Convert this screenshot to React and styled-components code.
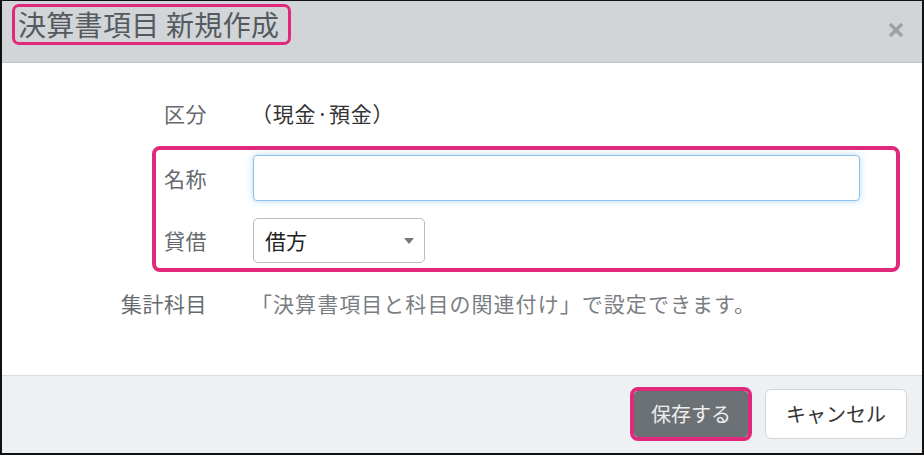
import React from "react";
import styled, { createGlobalStyle } from "styled-components";

const Global = createGlobalStyle`
  html, body { margin: 0; padding: 0; background: #fff; }
  body { font-family: "Noto Sans CJK JP", "Noto Sans", sans-serif; }
  * { box-sizing: border-box; }
`;

const Frame = styled.div`
  width: 924px;
  height: 455px;
  border-style: solid;
  border-color: #111;
  border-width: 1px 2px 2px 2px;
  display: flex;
  flex-direction: column;
  overflow: hidden;
`;

const Header = styled.div`
  height: 62px;
  flex: none;
  background: #d1d5d8;
  border-bottom: 1px solid #c3c7ca;
  display: flex;
  align-items: center;
  justify-content: space-between;
  padding: 0 17px 0 10px;
`;

const Highlight = styled.div`
  border: ${(p) => p.$w || 4}px solid #e0297a;
  border-radius: ${(p) => p.$r || 8}px;
`;

const TitleBox = styled(Highlight)`
  height: 41px;
  width: 279px;
  display: flex;
  align-items: center;
  padding: 0 0 2px 3px;
  margin-top: -14px;
`;

const Title = styled.h1`
  margin: 0;
  font-size: 28px;
  font-weight: 400;
  color: #555a5e;
  letter-spacing: 0.3px;
  line-height: 1;
  white-space: nowrap;
`;

const Close = styled.button`
  border: 0;
  background: none;
  padding: 0;
  width: 18px;
  height: 18px;
  margin-top: -4px;
  display: flex;
  align-items: center;
  justify-content: center;
  cursor: pointer;
`;

const Body = styled.div`
  flex: 1;
  padding-top: 27px;
`;

const Row = styled.div`
  display: grid;
  grid-template-columns: ${(p) => p.$label}px 1fr;
  column-gap: 46px;
  align-items: center;
  min-height: 46px;
`;

const Label = styled.div`
  text-align: right;
  font-size: 21px;
  color: #666a6e;
  white-space: nowrap;
  letter-spacing: 0.5px;
`;

const Value = styled.div`
  font-size: 21px;
  color: #333;
  margin-left: -2px;
  letter-spacing: 0.8px;
`;

const Note = styled.div`
  font-size: 21px;
  color: #7a7e82;
  letter-spacing: 1.05px;
  margin-left: -2px;
  white-space: nowrap;
`;

const Group = styled(Highlight)`
  margin: 10px 22px 0 150px;
  padding: 5px 36px 5px 0;
  display: flex;
  flex-direction: column;
  gap: 16px;
`;

const TextInput = styled.input`
  width: 100%;
  height: 46px;
  border: 1.5px solid #8cc1ec;
  border-radius: 4px;
  box-shadow: 0 0 7px rgba(102, 175, 233, 0.45);
  outline: none;
  font-size: 20px;
  padding: 0 12px;
  font-family: inherit;
`;

const Select = styled.div`
  width: 172px;
  height: 45px;
  border: 1px solid #b8bcc0;
  border-radius: 5px;
  display: flex;
  align-items: center;
  justify-content: space-between;
  padding: 0 10px 0 11px;
  font-size: 21px;
  color: #222;
  background: #fff;
`;

const Caret = styled.span`
  width: 0;
  height: 0;
  border-left: 5.5px solid transparent;
  border-right: 5.5px solid transparent;
  border-top: 6px solid #777;
  margin-top: 2px;
`;

const NoteRow = styled(Row)`
  margin-top: 8px;
`;

const Footer = styled.div`
  flex: none;
  height: 78px;
  background: #eef1f4;
  border-top: 1px solid #dadde0;
  display: flex;
  align-items: center;
  justify-content: flex-end;
  gap: 13px;
  padding: 0 15px 2px 0;
`;

const SaveWrap = styled(Highlight)`
  padding: 0;
  border-radius: 8px;
`;

const Button = styled.button`
  font-family: inherit;
  font-size: 20px;
  height: ${(p) => (p.$primary ? 46 : 50)}px;
  padding: 0 ${(p) => (p.$primary ? 16 : 20)}px;
  border-radius: ${(p) => (p.$primary ? 4 : 6)}px;
  border: 1px solid ${(p) => (p.$primary ? "#6c7175" : "#d2d5d8")};
  background: ${(p) => (p.$primary ? "#6c7175" : "#fff")};
  color: ${(p) => (p.$primary ? "#eceeef" : "#333")};
  display: block;
  cursor: pointer;
`;

export default function App() {
  return (
    <>
      <Global />
      <Frame>
        <Header>
          <TitleBox $w={3} $r={7}>
            <Title>決算書項目 新規作成</Title>
          </TitleBox>
          <Close aria-label="close">
            <svg width="16" height="16" viewBox="0 0 16 16">
              <path d="M2 2 L14 14 M14 2 L2 14" stroke="#9ea2a6" strokeWidth="3.6" strokeLinecap="butt" />
            </svg>
          </Close>
        </Header>
        <Body>
          <Row $label={205}>
            <Label>区分</Label>
            <Value>（現金·預金）</Value>
          </Row>
          <Group>
            <Row $label={51}>
              <Label>名称</Label>
              <TextInput type="text" />
            </Row>
            <Row $label={51}>
              <Label>貸借</Label>
              <Select>
                借方
                <Caret />
              </Select>
            </Row>
          </Group>
          <NoteRow $label={205}>
            <Label>集計科目</Label>
            <Note>「決算書項目と科目の関連付け」で設定できます。</Note>
          </NoteRow>
        </Body>
        <Footer>
          <SaveWrap>
            <Button $primary>保存する</Button>
          </SaveWrap>
          <Button>キャンセル</Button>
        </Footer>
      </Frame>
    </>
  );
}
